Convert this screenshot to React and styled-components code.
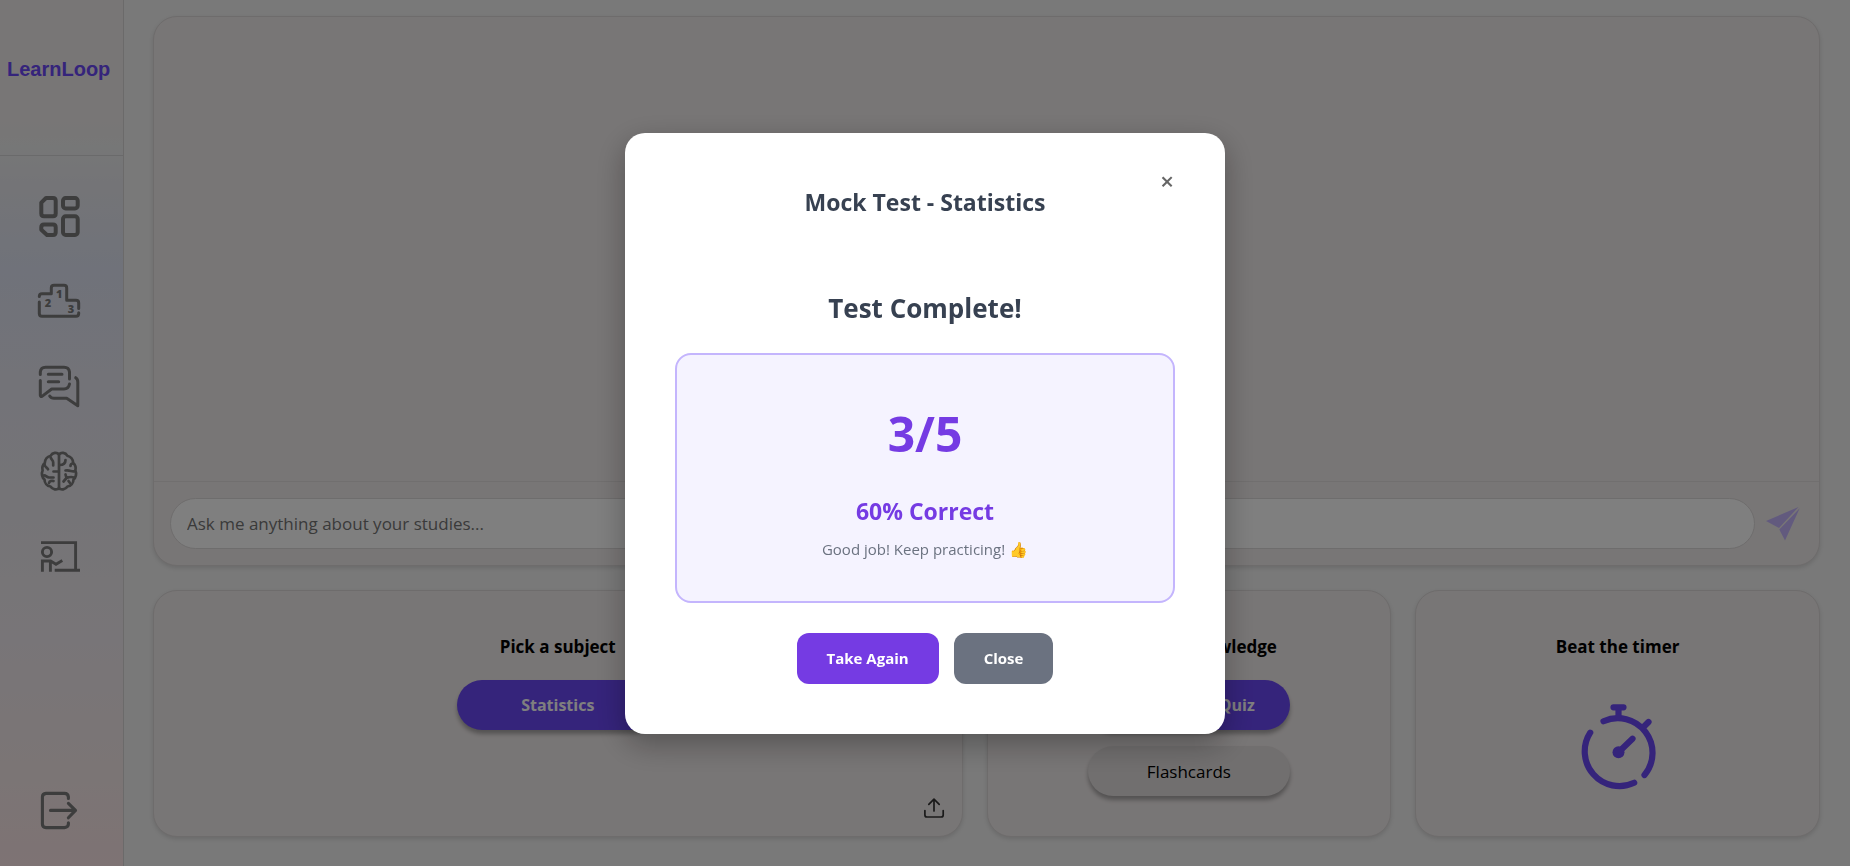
import React from "react";
import styled, { createGlobalStyle } from "styled-components";

const GlobalStyle = createGlobalStyle`
  *, *::before, *::after { box-sizing: border-box; }
  body {
    margin: 0;
    background: #f2f2f2;
    color: #000;
    font-family: "Open Sans", "Noto Sans", sans-serif;
    font-size: 17px;
  }
  h1, h2, h3, p { margin: 0; }
  button, input { font: inherit; }
  button { border: 0; padding: 0; background: none; cursor: pointer; }
  svg { display: block; }
`;

const Page = styled.div`
  display: flex;
  min-height: 100vh;
`;

const Sidebar = styled.aside`
  display: flex;
  flex-direction: column;
  flex: none;
  width: 124px;
  border-right: 1px solid #d6d4d4;
  background: linear-gradient(
    180deg,
    #f1ecec 0%,
    #f0ecec 14%,
    #edeeee 17%,
    #e9e9ee 21%,
    #e0e5f4 31%,
    #e6e6f1 43%,
    #ebe9ee 60%,
    #f1ebf0 74%,
    #f6ebeb 88%,
    #fce6e8 100%
  );
`;

const Brand = styled.div`
  display: flex;
  align-items: center;
  height: 156px;
  padding: 0 7px 16px;
  border-bottom: 1px solid #d4d4d6;
  font-family: "Liberation Sans", Arial, sans-serif;
  font-size: 20px;
  font-weight: 700;
  color: #6b48f6;
`;

const Nav = styled.nav`
  display: flex;
  flex: 1;
  flex-direction: column;
  align-items: center;
  gap: 40px;
  padding: 38px 4px 33px 0;
`;

const NavLink = styled.a`
  width: 45px;
  height: 45px;
  margin-top: ${(p) => (p.$last ? "auto" : "0")};
  color: #7a7a7a;
`;

const Main = styled.main`
  display: flex;
  flex: 1;
  flex-direction: column;
  gap: 24px;
  min-width: 0;
  padding: 16px 30px 29px 29px;
`;

const Card = styled.section`
  position: relative;
  display: flex;
  flex-direction: column;
  border: 1px solid #dcd8d8;
  border-radius: 24px;
  background: #f1ecec;
  box-shadow: 0 2px 4px rgba(0, 0, 0, 0.12);
`;

const ChatCard = styled(Card)`
  flex: 1;
  justify-content: flex-end;
`;

const ChatForm = styled.form`
  display: flex;
  align-items: center;
  gap: 10px;
  padding: 16px;
  border-top: 1px solid #e2dede;
`;

const ChatInput = styled.input`
  flex: 1;
  min-width: 0;
  height: 51px;
  padding: 0 16px;
  border: 1px solid #dddada;
  border-radius: 26px;
  background: #fff;
  &::placeholder { color: #757575; opacity: 1; }
`;

const SendButton = styled.button`
  width: 38px;
  height: 38px;
  color: #c4b5fd;
`;

const Tools = styled.div`
  display: grid;
  grid-template-columns: 2fr 1fr 1fr;
  gap: 24px;
`;

const ToolCard = styled(Card)`
  align-items: center;
  padding: 40px 24px;
`;

const ToolTitle = styled.h3`
  margin-bottom: 17px;
  font-size: 17px;
  line-height: 32px;
  font-weight: 700;
`;

const ToolActions = styled.div`
  display: flex;
  flex-direction: column;
  gap: 16px;
  width: 202px;
  max-width: 100%;
`;

const Pill = styled.button`
  height: 50px;
  border-radius: 25px;
  background: ${(p) => (p.$primary ? "#6b48f6" : "#e2dede")};
  color: ${(p) => (p.$primary ? "#fff" : "#000")};
  font-size: ${(p) => (p.$primary ? "16px" : "17px")};
  font-weight: ${(p) => (p.$primary ? 700 : 400)};
  box-shadow: 0 4px 4px rgba(0, 0, 0, 0.3);
`;

const TimerButton = styled.button`
  width: 90px;
  height: 90px;
  margin-top: 22px;
  color: #6b48f6;
`;

const UploadButton = styled.button`
  position: absolute;
  right: 16px;
  bottom: 16px;
  width: 24px;
  height: 24px;
  color: #333;
`;

const Overlay = styled.div`
  position: fixed;
  inset: 0;
  display: flex;
  align-items: center;
  justify-content: center;
  background: rgba(0, 0, 0, 0.5);
`;

const Dialog = styled.div`
  width: 600px;
  max-width: 90%;
  padding: 50px;
  border-radius: 20px;
  background: #fff;
  color: #374151;
  text-align: center;
  box-shadow: 0 10px 30px rgba(0, 0, 0, 0.3);
`;

const DialogHeader = styled.header`
  position: relative;
  margin-bottom: 66px;
`;

const DialogTitle = styled.h2`
  font-size: 23px;
  line-height: 38px;
  font-weight: 700;
`;

const DialogClose = styled.button`
  position: absolute;
  top: -14px;
  right: 0;
  width: 16px;
  font-size: 24px;
  line-height: 24px;
  font-weight: 600;
  color: #666;
`;

const ResultTitle = styled.h3`
  margin-bottom: 24px;
  font-size: 26px;
  line-height: 42px;
  font-weight: 700;
`;

const ScoreBox = styled.div`
  margin-bottom: 30px;
  padding: 40px;
  border: 2px solid #c4b5fd;
  border-radius: 16px;
  background: #f5f3ff;
  color: #753be3;
`;

const Score = styled.div`
  margin-bottom: 20px;
  font-size: 48px;
  line-height: 78px;
  font-weight: 700;
`;

const Percent = styled.div`
  margin-bottom: 8px;
  font-size: 23px;
  line-height: 36px;
  font-weight: 700;
`;

const Message = styled.p`
  font-size: 15px;
  line-height: 24px;
  color: #6b7280;
`;

const DialogActions = styled.div`
  display: flex;
  justify-content: center;
  gap: 15px;
`;

const DialogButton = styled.button`
  height: 51px;
  padding: 0 30px;
  border-radius: 12px;
  background: ${(p) => (p.$primary ? "#753be3" : "#6b7280")};
  color: #fff;
  font-size: 15px;
  font-weight: 700;
`;

const Icon = ({ box = 45, width = 3, children }) => (
  <svg
    viewBox={`0 0 ${box} ${box}`}
    width="100%"
    height="100%"
    fill="none"
    stroke="currentColor"
    strokeWidth={width}
    strokeLinecap="round"
    strokeLinejoin="round"
    aria-hidden="true"
  >
    {children}
  </svg>
);

const DashboardIcon = () => (
  <Icon width={4}>
    <path d="M9 4H16Q18.7 4 18.7 6.7V19.6Q18.7 22.3 16 22.3H7Q4.3 22.3 4.3 19.6V8.6Z" />
    <rect x="26" y="4" width="14.7" height="10.4" rx="2.7" />
    <path d="M7 30.6H16Q18.7 30.6 18.7 33.3V38.3Q18.7 41 16 41H10L4.3 35.8V33.3Q4.3 30.6 7 30.6Z" />
    <rect x="26" y="22.3" width="14.7" height="18.7" rx="2.7" />
  </Icon>
);

const Digit = styled.text`
  fill: currentColor;
  stroke: none;
  font-family: "Open Sans", sans-serif;
  font-size: 11px;
  font-weight: 800;
  text-anchor: middle;
`;

const PodiumIcon = () => (
  <Icon>
    <path d="M2.3 17.6Q2.3 14.7 5 14.7H14.3V9Q14.3 6.3 17 6.3H27Q29.7 6.3 29.7 9V21.3H39Q41.7 21.3 41.7 24V29.5M41.7 33.8V34.6Q41.7 37.3 39 37.3H5Q2.3 37.3 2.3 34.6V23" />
    <Digit x="22.3" y="19">1</Digit>
    <Digit x="11" y="27.6">2</Digit>
    <Digit x="34" y="33.6">3</Digit>
  </Icon>
);

const ChatIcon = () => (
  <Icon>
    <path d="M3.3 10.6V8Q3.8 3.3 8.5 3.3H27Q32 3.3 32.5 8V15M32.5 20Q31.5 25 27 25H14.7L5 32.4Q3.5 33 3.3 31.4V16.4" />
    <path d="M11.3 10.3H25M11.3 17.7H21.7" />
    <path d="M38.7 13.7Q40.8 15 40.8 18V41.8L29.7 34.3H17Q14 34.3 12.7 32" />
  </Icon>
);

const BrainIcon = () => (
  <Icon width={2.7}>
    <path d="M22 5V40" />
    <path d="M22 5.500C20 3 15.500 3.500 13.700 6.700C10.500 7.500 8 10.500 7.800 14C5.500 16 5 19 5.600 21.500C4.200 24.500 5 28.500 7.500 30.500C7.500 34 10 37 13.500 37.500C15.500 40.500 20 41.500 22 39" />
    <path d="M22 5.500C24 3 28.500 3.500 30.300 6.700C33.500 7.500 36 10.500 36.200 14C38.500 16 39 19 38.400 21.500C39.800 24.500 39 28.500 36.500 30.500C36.500 34 34 37 30.500 37.500C28.500 40.500 24 41.500 22 39" />
    <path d="M13.700 8.500C14 10.500 16.300 11 16.200 13.500V16.500M7.800 16C8 18.500 10 18 11 20.300M16.500 22.500H21.500" />
    <path d="M6.500 26.500C9 26 9.500 28.500 12 28.500H16.500M12 34C12.500 32 14.500 31.500 16.500 32" />
    <path d="M28.500 11C28.500 14 26.500 16 22.500 16M38 22C35 23.500 33 20.500 28.500 21.500M33.500 17C33.500 15.500 34.500 14.500 36 14.500" />
    <path d="M37 28.500C34.500 27.500 32 28 29.500 29L26.500 32.500M29.500 29L28.500 25.500M31.500 32L33 34" />
  </Icon>
);

const TeacherIcon = () => (
  <Icon width={2.9}>
    <g strokeLinecap="butt" strokeLinejoin="miter">
      <path d="M4 8.600H38.600V36.300M17.700 36.300H43" />
      <circle cx="10" cy="18" r="4.600" />
      <path d="M5.400 37.700V27H13.600L19 30.200L25.300 26.600M13.400 37.700V28.500" />
    </g>
  </Icon>
);

const LogoutIcon = () => (
  <Icon width={3.1}>
    <path d="M31.400 10.500V9Q31 5.400 27.500 5.400H9Q5.400 5.800 5.400 9V36Q5.400 39.600 9 39.600H27.500Q31.400 39.200 31.400 36V34.800" />
    <path d="M13.500 22.400H38.500M31.400 15.300L38.500 22.400L31.400 29.800" />
  </Icon>
);

const SendIcon = () => (
  <svg viewBox="0 0 38 38" width="38" height="38" fill="currentColor" aria-hidden="true">
    <path d="M1 16L33.500 2L14 23ZM34.700 3.300L20 35.600L14.300 24.600Z" />
  </svg>
);

const UploadIcon = () => (
  <Icon box={24} width={1.7}>
    <path d="M2.900 14.600V19Q2.900 21 4.900 21H19.200Q21.200 21 21.200 19V14.600" />
    <path d="M12 15V3.400M6.800 8.400L12 3.200L17.200 8.400" />
  </Icon>
);

const StopwatchIcon = () => (
  <Icon box={90} width={6.2}>
    <path d="M17.200 30.700A34.700 34.700 0 0 0 61.200 80.800M71.500 73A34.700 34.700 0 0 0 30.500 19.200" />
    <path d="M40.500 5.300H50.500M45.500 5.300V15M75.500 20L70.500 25M59.500 36.700L45.500 50.300" />
    <circle cx="45.500" cy="50.300" r="6" fill="currentColor" stroke="none" />
  </Icon>
);

const links = [
  ["Dashboard", DashboardIcon],
  ["Leaderboard", PodiumIcon],
  ["Messages", ChatIcon],
  ["Study", BrainIcon],
  ["Classroom", TeacherIcon],
  ["Log out", LogoutIcon],
];

export default function App() {
  return (
    <>
      <GlobalStyle />
      <Page>
        <Sidebar>
          <Brand>LearnLoop</Brand>
          <Nav>
            {links.map(([label, Glyph], i) => (
              <NavLink key={label} href="#" aria-label={label} $last={i === links.length - 1}>
                <Glyph />
              </NavLink>
            ))}
          </Nav>
        </Sidebar>
        <Main>
          <ChatCard>
            <ChatForm>
              <ChatInput
                type="text"
                aria-label="Ask a question"
                placeholder="Ask me anything about your studies..."
              />
              <SendButton type="button" aria-label="Send">
                <SendIcon />
              </SendButton>
            </ChatForm>
          </ChatCard>
          <Tools>
            <ToolCard>
              <ToolTitle>Pick a subject</ToolTitle>
              <ToolActions>
                <Pill $primary>Statistics</Pill>
              </ToolActions>
              <UploadButton aria-label="Upload">
                <UploadIcon />
              </UploadButton>
            </ToolCard>
            <ToolCard>
              <ToolTitle>Test your knowledge</ToolTitle>
              <ToolActions>
                <Pill $primary>Mock Test / Quiz</Pill>
                <Pill>Flashcards</Pill>
              </ToolActions>
            </ToolCard>
            <ToolCard>
              <ToolTitle>Beat the timer</ToolTitle>
              <TimerButton aria-label="Start timer">
                <StopwatchIcon />
              </TimerButton>
            </ToolCard>
          </Tools>
        </Main>
      </Page>
      <Overlay>
        <Dialog role="dialog" aria-modal="true" aria-labelledby="dialog-title">
          <DialogHeader>
            <DialogTitle id="dialog-title">Mock Test - Statistics</DialogTitle>
            <DialogClose aria-label="Close dialog">×</DialogClose>
          </DialogHeader>
          <ResultTitle>Test Complete!</ResultTitle>
          <ScoreBox>
            <Score>3/5</Score>
            <Percent>60% Correct</Percent>
            <Message>Good job! Keep practicing! 👍</Message>
          </ScoreBox>
          <DialogActions>
            <DialogButton $primary>Take Again</DialogButton>
            <DialogButton>Close</DialogButton>
          </DialogActions>
        </Dialog>
      </Overlay>
    </>
  );
}
